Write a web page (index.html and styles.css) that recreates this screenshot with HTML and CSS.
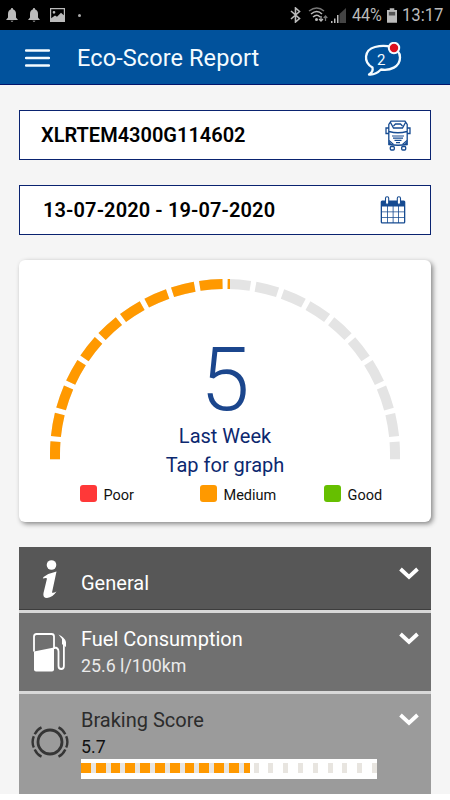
FILE: index.html
```html
<!DOCTYPE html>
<html lang="en">
<head>
<meta charset="utf-8">
<title>Eco-Score Report</title>
<link rel="stylesheet" href="styles.css">
</head>
<body>
<div class="status">
  <div class="status-left">
    <svg class="bell" viewBox="0 0 12 14"><path d="M6 0c.8 0 1 .6 1 1.200C9 1.800 10 3.500 10 6v3.500L12 12H0l2-2.500V6C2 3.500 3 1.800 5 1.200 5 .6 5.200 0 6 0zM4.500 12.700h3Q6 15 4.500 12.700z"/></svg>
    <svg class="bell" viewBox="0 0 12 14"><path d="M6 0c.8 0 1 .6 1 1.200C9 1.800 10 3.500 10 6v3.500L12 12H0l2-2.500V6C2 3.500 3 1.800 5 1.200 5 .6 5.200 0 6 0zM4.500 12.700h3Q6 15 4.500 12.700z"/></svg>
    <svg class="photo" viewBox="0 0 15 14"><path fill-rule="evenodd" d="M0 0h15v14H0zM1.200 1.200v9L5 7.500l2 1.300 4-4 2.800 2.500V1.200zM4 3a1.300 1.300 0 1 1 0 2.700A1.300 1.300 0 0 1 4 3z"/></svg>
    <span class="dot"></span>
  </div>
  <div class="status-right">
    <svg class="bt" viewBox="0 0 11 16"><path d="M1 4l8.500 7.500L5.500 15V1l4 3.500L1 12"/></svg>
    <svg class="wifi" viewBox="0 0 20 16"><g fill="none" stroke="#bbb" stroke-width="1.500"><path d="M3 7q6-5 11 0M5 10q4-3.500 7 0" /><path stroke="#777" d="M1 4q8-6 15 0"/><path d="M13 9v5M11 12l2 2.200 2-2.200" stroke-width="1.200"/><path stroke="#777" d="M17.500 14V9M15.700 11l1.800-2 1.800 2" stroke-width="1.200"/></g><circle cx="8.500" cy="12.500" r="1.500" fill="#bbb"/></svg>
    <svg class="signal" viewBox="0 0 15 15"><path fill="#bbb" d="M0 13h1.500v2H0zM3 10.500h1.500V15H3zM6 7h1.500v8H6z"/><path fill="#444" d="M8.500 6L15 0v15H8.500z"/></svg>
    <span class="percent">44%</span>
    <svg class="battery" viewBox="0 0 11 16"><path fill="#bbb" d="M3 0h5v2h3v14H0V2h3z"/><path fill="#555" d="M2 4h7v4H2z"/></svg>
    <span class="clock">13:17</span>
  </div>
</div>
<header class="bar">
  <svg class="menu" viewBox="0 0 25 18"><path d="M1 1.500h23M1 9h23M1 16.500h23"/></svg>
  <h1 class="title">Eco-Score Report</h1>
  <div class="chat">
    <svg viewBox="0 0 38 37"><path class="bubble" d="M8.500 25.500C-1 20 0 8 11 5 22 2 36 5 36 15.500 36 25 26 29 17 27.500 13 31.500 9 33 5 32.500Q9.500 30 8.500 25.500z"/><circle cx="30" cy="6" r="5.200" fill="#dc1020" stroke="#f4fbff" stroke-width="2"/></svg>
    <span class="count">2</span>
  </div>
</header>
<main class="page">
  <div class="field">
    <span class="vin">XLRTEM4300G114602</span>
    <svg class="truck" viewBox="0 0 26 31"><g fill="none" stroke="#164b91" stroke-width="1.300"><path d="M3.800 24.500V4.500L6 1.200h14l2.200 3.300v20q-9.200 1.500-18.400 0zM4 11.500q9 2.500 18 0M5.500 2.500l3 5.500h9l3-5.500M8.500 6l2-2h5l2 2M3.500 8H1v5.500h2.500M22.500 8H25v5.500h-2.500"/><rect x="5.300" y="26.500" width="4" height="3.500" rx="1"/><rect x="16.700" y="26.500" width="4" height="3.500" rx="1"/><path stroke-width="1.200" d="M7 16h12M8 18.200h10M9.500 20.400h7M11 22.600h4M4 20.500l4.500 4M22 20.500l-4.500 4"/></g><path fill="#164b91" d="M4 21.500l3.500 3.500H4zM22 21.500L18.500 25H22z"/></svg>
  </div>
  <div class="field">
    <span class="range">13-07-2020 - 19-07-2020</span>
    <svg class="calendar" viewBox="0 0 26 28"><rect x=".7" y="4.500" width="24.600" height="23" rx="1.500" fill="#164b91"/><path fill="#fff" d="M2 10.500h5.200v5H2zM8 10.500h4.700v5H8zM13.500 10.500h4.700v5h-4.700zM19 10.500h5v5h-5zM2 16.300h5.200v4.700H2zM8 16.300h4.700v4.700H8zM13.500 16.300h4.700v4.700h-4.700zM19 16.300h5v4.700h-5zM2 21.800h5.200v4.500H2zM8 21.800h4.700v4.500H8zM13.500 21.800h4.700v4.500h-4.700zM19 21.800h5v4.500h-5z"/><g fill="#fff" stroke="#164b91" stroke-width="1.100"><rect x="5.500" y=".8" width="3.200" height="7.500" rx="1.500"/><rect x="17.300" y=".8" width="3.200" height="7.500" rx="1.500"/></g></svg>
  </div>
  <section class="card">
    <div class="gauge">
      <svg viewBox="0 0 360 190">
        <defs><clipPath id="reached"><path d="M0 0H185V190H0z"/></clipPath></defs>
        <path class="arc" d="M10 183.300V178A170 170 0 0 1 350 178V183.300"/>
        <path class="arc arc-on" clip-path="url(#reached)" d="M10 183.300V178A170 170 0 0 1 350 178V183.300"/>
      </svg>
      <div class="reading">
        <span class="score">5</span>
        <span class="caption">Last Week</span>
        <span class="caption">Tap for graph</span>
      </div>
    </div>
    <div class="legend">
      <div class="key"><span class="swatch poor"></span>Poor</div>
      <div class="key"><span class="swatch medium"></span>Medium</div>
      <div class="key"><span class="swatch good"></span>Good</div>
    </div>
  </section>
  <section class="rows">
    <div class="row general">
      <div class="icon"><svg class="info" viewBox="0 0 16 39"><circle cx="9.500" cy="5" r="4.800"/><path d="M1.500 17Q7 13 14.500 11.500L10 32.500Q11 33.500 14.500 31.500 11 37 5 38 .5 38 1.500 33L5 18.500Q4.500 17.500 .8 18.500z"/></svg></div>
      <div class="text"><div class="name">General</div></div>
      <svg class="chev" viewBox="0 0 20 13"><path d="M1.500 2l8.500 8 8.500-8"/></svg>
    </div>
    <div class="row fuel">
      <div class="icon"><svg class="pump" viewBox="0 0 33 39"><path fill="#fff" d="M1 18.500l20-4v22q0 2-2 2H3q-2 0-2-2z"/><path fill="none" stroke="#fff" stroke-width="1.800" d="M1 18.500V3.500Q1 1 3.500 1h15Q21 1 21 3.500V16M21 14.500q4.500 0 4.500 4V33q0 3 2.700 3t2.700-3V12l-1-4"/><path fill="#fff" d="M25.500 1.500Q31.500 4 33 9v5l-4-3V6z"/></svg></div>
      <div class="text"><div class="name">Fuel Consumption</div><div class="value">25.6 l/100km</div></div>
      <svg class="chev" viewBox="0 0 20 13"><path d="M1.500 2l8.500 8 8.500-8"/></svg>
    </div>
    <div class="row braking">
      <div class="icon"><svg class="brake" viewBox="0 0 38 32"><g fill="none" stroke="#353535"><circle cx="19" cy="16" r="12" stroke-width="2.800"/><path stroke-width="2.400" d="M10.500 1.300Q6 3.500 3.700 8.300M2.800 10.200Q.4 16 2.800 21.500M3.700 23.500Q6 28.500 10.500 30.700M27.500 1.300Q32 3.500 34.300 8.300M35.200 10.200q2.400 5.800 0 11.300M34.300 23.500Q32 28.500 27.500 30.700"/></g></svg></div>
      <div class="text"><div class="name">Braking Score</div><div class="value">5.7</div>
        <div class="meter"><div class="track"><div class="fill" style="width:57.200%"></div></div></div>
      </div>
      <svg class="chev" viewBox="0 0 20 13"><path d="M1.500 2l8.500 8 8.500-8"/></svg>
    </div>
  </section>
</main>
</body>
</html>
```

FILE: styles.css
```css
* { box-sizing: border-box; }
body { margin: 0; width: 450px; height: 800px; overflow: hidden; background: #fff; font-family: Roboto, sans-serif; }
svg { display: block; flex: none; }
.status { height: 30px; background: #000; display: flex; justify-content: space-between; padding: 0 7px 0 6px; color: #bbb; font-size: 18.5px; }
.status-left, .status-right { display: flex; align-items: center; }
.bell { width: 12px; height: 14px; margin-right: 10px; fill: #bbb; }
.photo { width: 15px; height: 14px; fill: #bbb; }
.dot { width: 3px; height: 3px; border-radius: 50%; background: #aaa; margin-left: 13px; }
.bt { width: 11px; height: 16px; fill: none; stroke: #bbb; stroke-width: 1.6; margin-right: 7px; }
.wifi { width: 20px; height: 16px; margin-right: 3px; }
.signal { width: 15px; height: 15px; margin-right: 6px; }
.percent { width: 30px; white-space: nowrap; transform: scaleX(.87); transform-origin: left; }
.battery { width: 10px; height: 15px; margin: 0 5px 0 5px; }
.clock { width: 41px; transform: scaleX(.9); transform-origin: left; }
.bar { height: 55px; background: #01529c; border-bottom: 1px solid #02156b; display: flex; align-items: center; padding-left: 25px; }
.menu { width: 25px; height: 18px; margin-top: 1px; }
.menu path { stroke: #f4fbff; stroke-width: 2.3; stroke-linecap: round; }
.title { margin: 2px 0 0 27px; width: 287px; font-size: 23.5px; line-height: 28px; font-weight: 400; color: #f4fbff; letter-spacing: .1px; }
.chat { position: relative; width: 38px; height: 37px; margin-top: 7px; }
.chat svg { width: 38px; height: 37px; }
.bubble { fill: none; stroke: #f4fbff; stroke-width: 2.3; stroke-linejoin: round; }
.count { position: absolute; left: 13px; top: 9px; font-size: 15px; line-height: 18px; color: #f4fbff; }
.page { height: 709px; background: #f5f5f5; padding: 25px 19px 0; }
.field { height: 50px; border: 1px solid #0a2370; background: #fff; margin-bottom: 25px; display: flex; align-items: center; justify-content: space-between; padding: 0 19px 0 21px; font-size: 20px; font-weight: 600; color: #000; }
.range { margin-left: 2px; letter-spacing: .12px; }
.truck { width: 26px; height: 31px; }
.calendar { width: 26px; height: 28px; margin-right: 5px; }
.card { height: 262px; border-radius: 6px; background: #fff; box-shadow: 2px 2px 5px rgba(0,0,0,.45); padding: 16px 26px 0; }
.gauge { position: relative; height: 207px; }
.gauge svg { width: 360px; height: 190px; }
.arc { fill: none; stroke: #e4e4e4; stroke-width: 10; stroke-dasharray: 22.8 5.2; stroke-dashoffset: 5.1; }
.arc-on { stroke: #ff9900; }
.reading { position: absolute; inset: 64px 0 0; display: flex; flex-direction: column; align-items: center; color: #0c286f; }
.score { font-size: 89px; line-height: 79px; margin-bottom: 3px; font-weight: 300; color: #1b468d; }
.caption { font-size: 20px; line-height: 28.5px; }
.legend { display: flex; font-size: 14.5px; color: #111; padding-left: 35px; }
.key { display: flex; align-items: center; gap: 6.5px; width: 120px; flex: none; height: 24px; line-height: 17px; }
.key + .key + .key { margin-left: 4px; }
.swatch { width: 17px; height: 17px; border-radius: 3px; margin-top: -3px; }
.poor { background: #ff3838; }
.medium { background: #ff9900; }
.good { background: #66bf00; }
.rows { margin-top: 25px; display: flex; flex-direction: column; gap: 3px; background: #d8d8d8; }
.row { display: flex; position: relative; color: #fff; padding-right: 12px; }
.general { height: 63px; background: #575757; border-bottom: 1px solid #3d3d3d; }
.fuel { height: 78px; background: #707070; }
.braking { height: 100px; background: #9b9b9b; color: #2c2c2c; }
.icon { width: 62px; flex: none; display: flex; justify-content: center; align-items: center; }
.info { width: 16px; height: 39px; fill: #fff; }
.general .icon { padding-top: 2px; }
.pump { width: 33px; height: 39px; margin-right: 1px; }
.brake { width: 38px; height: 32px; }
.braking .icon { padding-bottom: 4px; }
.text { flex: 1; }
.name { font-size: 20px; line-height: 26px; padding-top: 13px; }
.general .name { padding-top: 23px; }
.value { font-size: 17.8px; line-height: 26px; padding-top: 1px; }
.fuel .value { color: #eaeaea; }
.braking .value { color: #111; }
.chev { width: 20px; height: 13px; margin-top: 19px; fill: none; stroke: #fff; stroke-width: 3.8; }
.general .chev { margin-top: 20px; }
.meter { width: 296px; height: 20px; background: #fff; padding-top: 4px; margin-top: -1px; }
.track { height: 10px; background: repeating-linear-gradient(90deg, transparent 0 9.8px, #e8e5e0 9.8px 14.8px); }
.fill { height: 10px; background: repeating-linear-gradient(90deg, #ff9900 0 9.8px, transparent 9.8px 14.8px); }
```
